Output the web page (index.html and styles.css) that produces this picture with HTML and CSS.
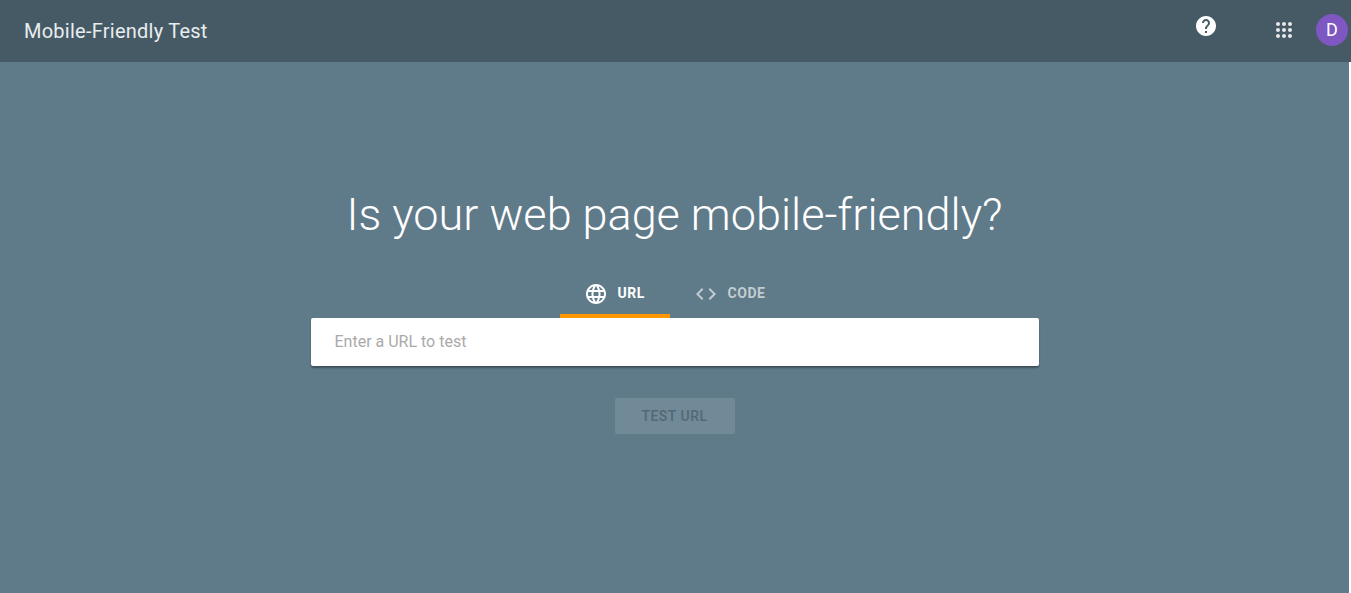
FILE: index.html
```html
<!DOCTYPE html>
<html lang="en">
<head>
<meta charset="utf-8">
<title>Mobile-Friendly Test</title>
<link rel="stylesheet" href="styles.css">
</head>
<body>
<header class="topbar">
  <div class="brand">Mobile-Friendly Test</div>
  <div class="actions">
    <svg class="help" viewBox="0 0 24 24" width="24" height="24"><path fill="#fff" d="M12 2C6.48 2 2 6.48 2 12s4.48 10 10 10 10-4.48 10-10S17.52 2 12 2zm1 17h-2v-2h2v2zm2.07-7.75l-.9.92C13.45 12.9 13 13.5 13 15h-2v-.5c0-1.1.45-2.1 1.17-2.83l1.24-1.26c.37-.36.59-.86.59-1.41 0-1.1-.9-2-2-2s-2 .9-2 2H8c0-2.21 1.79-4 4-4s4 1.79 4 4c0 .88-.36 1.68-.93 2.25z"/></svg>
    <svg class="apps" viewBox="0 0 24 24" width="24" height="24"><path fill="#e6e9ea" d="M6 8c1.1 0 2-.9 2-2s-.9-2-2-2-2 .9-2 2 .9 2 2 2zm6 12c1.1 0 2-.9 2-2s-.9-2-2-2-2 .9-2 2 .9 2 2 2zm-6 0c1.1 0 2-.9 2-2s-.9-2-2-2-2 .9-2 2 .9 2 2 2zm0-6c1.1 0 2-.9 2-2s-.9-2-2-2-2 .9-2 2 .9 2 2 2zm6 0c1.1 0 2-.9 2-2s-.9-2-2-2-2 .9-2 2 .9 2 2 2zm4-8c0 1.1.9 2 2 2s2-.9 2-2-.9-2-2-2-2 .9-2 2zm-4 2c1.1 0 2-.9 2-2s-.9-2-2-2-2 .9-2 2 .9 2 2 2zm6 6c1.1 0 2-.9 2-2s-.9-2-2-2-2 .9-2 2 .9 2 2 2zm0 6c1.1 0 2-.9 2-2s-.9-2-2-2-2 .9-2 2 .9 2 2 2z"/></svg>
    <div class="avatar">D</div>
  </div>
</header>
<main class="hero">
  <h1 class="title">Is your web page mobile-friendly?</h1>
  <nav class="tabs">
    <div class="tab tab-active">
      <svg class="tab-icon" viewBox="0 0 24 24" width="24" height="24"><path fill="#fff" d="M11.99 2C6.47 2 2 6.48 2 12s4.47 10 9.99 10C17.52 22 22 17.52 22 12S17.52 2 11.99 2zm6.93 6h-2.95c-.32-1.25-.78-2.45-1.38-3.56 1.84.63 3.37 1.91 4.33 3.56zM12 4.04c.83 1.2 1.48 2.53 1.91 3.96h-3.82c.43-1.43 1.08-2.76 1.91-3.96zM4.26 14C4.1 13.36 4 12.69 4 12s.1-1.36.26-2h3.38c-.08.66-.14 1.32-.14 2 0 .68.06 1.34.14 2H4.26zm.82 2h2.95c.32 1.25.78 2.45 1.38 3.56-1.84-.63-3.37-1.9-4.33-3.56zm2.95-8H5.08c.96-1.66 2.49-2.93 4.33-3.56C8.81 5.55 8.35 6.75 8.03 8zM12 19.96c-.83-1.2-1.48-2.53-1.91-3.96h3.82c-.43 1.43-1.08 2.76-1.91 3.96zM14.34 14H9.66c-.09-.66-.16-1.32-.16-2 0-.68.07-1.35.16-2h4.68c.09.65.16 1.32.16 2 0 .68-.07 1.34-.16 2zm.25 5.56c.6-1.11 1.06-2.31 1.38-3.56h2.95c-.96 1.65-2.49 2.93-4.33 3.56zM16.36 14c.08-.66.14-1.32.14-2 0-.68-.06-1.34-.14-2h3.38c.16.64.26 1.31.26 2s-.1 1.36-.26 2h-3.38z"/></svg>
      <span>URL</span>
    </div>
    <div class="tab tab-idle">
      <svg class="tab-icon" viewBox="0 0 24 24" width="24" height="24"><path fill="#c3ccd1" d="M9.4 16.6L4.8 12l4.6-4.6L8 6l-6 6 6 6 1.4-1.4zm5.2 0l4.6-4.6-4.6-4.6L16 6l6 6-6 6-1.4-1.4z"/></svg>
      <span>CODE</span>
    </div>
  </nav>
  <div class="field">Enter a URL to test</div>
  <div class="submit">TEST URL</div>
</main>
</body>
</html>
```
FILE: styles.css
```css
html, body {
  margin: 0;
  height: 100%;
}
body {
  background: #fff;
  font-family: Roboto, "Liberation Sans", sans-serif;
  overflow: hidden;
  display: flex;
  flex-direction: column;
}
.topbar {
  height: 62px;
  flex: none;
  box-sizing: border-box;
  background: #465a65;
  display: flex;
  align-items: center;
  justify-content: space-between;
  padding: 0 3px 0 24px;
}
.brand {
  color: #e8edf0;
  font-size: 20px;
  line-height: 24px;
  letter-spacing: 0.25px;
}
.actions {
  display: flex;
  align-items: center;
  padding-bottom: 2px;
}
.help {
  margin-right: 54px;
  margin-bottom: 8px;
}
.apps {
  margin-right: 20px;
}
.avatar {
  width: 32px;
  height: 32px;
  border-radius: 50%;
  background: #7e57c2;
  color: #fff;
  font-size: 18px;
  line-height: 32px;
  text-align: center;
}
.hero {
  flex: 1;
  width: 1349px;
  background: #5f7a89;
  display: flex;
  flex-direction: column;
  align-items: center;
}
.title {
  margin: 125px 0 0;
  color: #fff;
  font-size: 45px;
  line-height: 56px;
  font-weight: 300;
}
.tabs {
  display: flex;
  margin-top: 29px;
}
.tab {
  box-sizing: border-box;
  height: 46px;
  padding: 0 24px;
  display: flex;
  align-items: center;
  gap: 10px;
  font-size: 14px;
  font-weight: 700;
  letter-spacing: 0.5px;
}
.tab-icon {
  margin-top: 2px;
}
.tab-active {
  width: 110px;
  color: #fff;
  border-bottom: 4px solid #ff9800;
}
.tab-idle {
  color: #c3ccd1;
  height: 42px;
}
.field {
  box-sizing: border-box;
  width: 728px;
  height: 48px;
  padding: 0 24px;
  background: #fff;
  border-radius: 2px;
  box-shadow: 0 2px 2px rgba(0, 0, 0, 0.35);
  color: #aaa;
  font-size: 16px;
  line-height: 48px;
}
.submit {
  box-sizing: border-box;
  width: 120px;
  height: 36px;
  margin-top: 32px;
  border-radius: 2px;
  background: #718a97;
  color: #536876;
  font-size: 14px;
  font-weight: 500;
  letter-spacing: 0.5px;
  line-height: 36px;
  text-align: center;
}
```
